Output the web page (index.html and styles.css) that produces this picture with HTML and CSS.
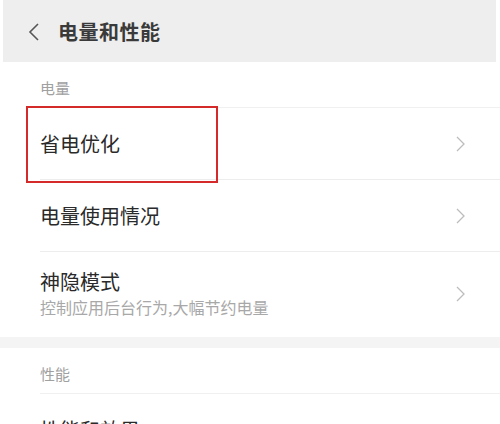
FILE: index.html
```html
<!DOCTYPE html>
<html lang="zh">
<head>
<meta charset="utf-8">
<link rel="stylesheet" href="styles.css">
</head>
<body>
<div class="page">
  <header class="topbar">
    <svg class="back" width="14" height="20" viewBox="0 0 14 20"><polyline points="11,2 3,10 11,18" fill="none" stroke="#555" stroke-width="1.6"/></svg>
    <h1 class="title">电量和性能</h1>
  </header>

  <section class="group">
    <div class="label">电量</div>
    <div class="row highlighted">
      <div class="text"><div class="name">省电优化</div></div>
      <svg class="chev" width="10" height="16" viewBox="0 0 10 16"><polyline points="2,1 9,8 2,15" fill="none" stroke="#bdbdbd" stroke-width="1.3"/></svg>
    </div>
    <div class="row">
      <div class="text"><div class="name">电量使用情况</div></div>
      <svg class="chev" width="10" height="16" viewBox="0 0 10 16"><polyline points="2,1 9,8 2,15" fill="none" stroke="#bdbdbd" stroke-width="1.3"/></svg>
    </div>
    <div class="row tall">
      <div class="text"><div class="name">神隐模式</div><div class="sub">控制应用后台行为,大幅节约电量</div></div>
      <svg class="chev" width="10" height="16" viewBox="0 0 10 16"><polyline points="2,1 9,8 2,15" fill="none" stroke="#bdbdbd" stroke-width="1.3"/></svg>
    </div>
  </section>

  <div class="band"></div>

  <section class="group">
    <div class="label">性能</div>
    <div class="row">
      <div class="text"><div class="name">性能和效果</div></div>
    </div>
  </section>
</div>
</body>
</html>
```
FILE: styles.css
```css
* { box-sizing: border-box; margin: 0; padding: 0; }
html, body { width: 500px; height: 424px; overflow: hidden; background: #fff; }
body { font-family: "Noto Sans CJK SC", "Noto Sans", sans-serif; color: #333; }
.page { width: 500px; }
.topbar {
  height: 62px;
  background: #eeeeee;
  display: flex;
  align-items: center;
  padding-left: 24px;
  margin: 0 4px 0 3px;
}
.back { display: block; margin-top: 1px; }
.title { font-size: 20px; font-weight: 700; color: #3a3a3a; margin-left: 17px; letter-spacing: 0.5px; }
.group { padding-left: 40px; }
.label {
  height: 46px;
  font-size: 15px;
  color: #a0a0a0;
  display: flex;
  align-items: center;
  border-bottom: 1px solid #f0f0f0;
  padding-top: 6px;
}
.row {
  height: 72px;
  display: flex;
  align-items: center;
  justify-content: space-between;
  padding-right: 35px;
  border-bottom: 1px solid #ededed;
  position: relative;
}
.row.tall { height: 85px; border-bottom: none; padding-bottom: 2px; }
.name { font-size: 20px; font-weight: 400; color: #2a2a2a; line-height: 1.3; }
.sub { font-size: 16px; color: #a8a8a8; margin-top: 1px; line-height: 1.4; }
.chev { display: block; }
.highlighted::before {
  content: "";
  position: absolute;
  left: -14px;
  top: -2px;
  width: 188px;
  height: 73px;
  border: 2.5px solid #d42a2a;
}
.band { height: 11px; background: #f4f4f4; }
```
